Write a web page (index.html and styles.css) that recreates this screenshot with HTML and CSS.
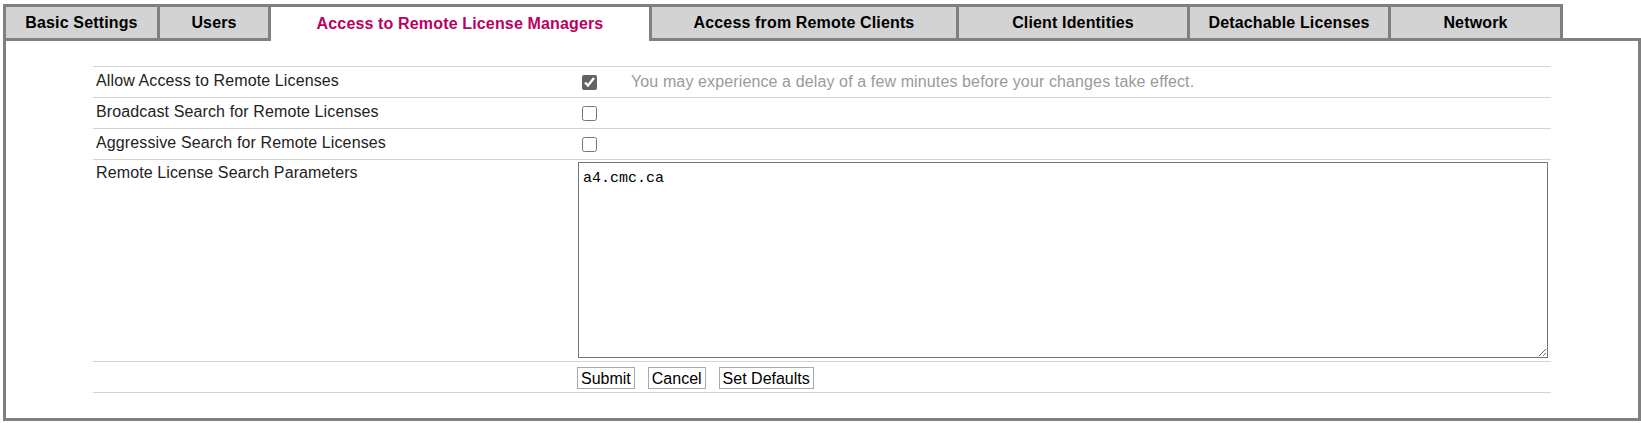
FILE: index.html
```html
<!DOCTYPE html>
<html lang="en">
<head>
<meta charset="utf-8">
<title>Access to Remote License Managers</title>
<link rel="stylesheet" href="styles.css">
</head>
<body>
<div class="tabs">
  <div class="tab tab-basic">Basic Settings</div>
  <div class="tab tab-users">Users</div>
  <div class="tab tab-arlm active">Access to Remote License Managers</div>
  <div class="tab tab-arc">Access from Remote Clients</div>
  <div class="tab tab-ci">Client Identities</div>
  <div class="tab tab-dl">Detachable Licenses</div>
  <div class="tab tab-net last">Network</div>
</div>
<div class="panel">
  <div class="form">
    <div class="row">
      <div class="label">Allow Access to Remote Licenses</div>
      <div class="value"><input type="checkbox" class="check" checked><span class="note">You may experience a delay of a few minutes before your changes take effect.</span></div>
    </div>
    <div class="row">
      <div class="label">Broadcast Search for Remote Licenses</div>
      <div class="value"><input type="checkbox" class="check"></div>
    </div>
    <div class="row">
      <div class="label">Aggressive Search for Remote Licenses</div>
      <div class="value"><input type="checkbox" class="check"></div>
    </div>
    <div class="row row-top">
      <div class="label label-top">Remote License Search Parameters</div>
      <div class="value value-top"><textarea class="params">a4.cmc.ca</textarea></div>
    </div>
    <div class="row">
      <div class="label"></div>
      <div class="value"><button class="btn">Submit</button><button class="btn">Cancel</button><button class="btn">Set Defaults</button></div>
    </div>
  </div>
</div>
</body>
</html>
```
FILE: styles.css
```css
html, body {
  margin: 0;
  background: #fff;
}
body {
  padding: 4px 0 0 3px;
  font-family: "Liberation Sans", Arial, sans-serif;
  font-size: 16px;
  letter-spacing: 0.12px;
  color: #222;
}
.tabs {
  display: flex;
  position: relative;
  z-index: 1;
  margin-bottom: -3px;
}
.tab {
  box-sizing: border-box;
  height: 37px;
  border: 3px solid #808080;
  border-right: none;
  background: #d3d3d3;
  color: #000;
  font-weight: bold;
  letter-spacing: 0.15px;
  display: flex;
  align-items: center;
  justify-content: center;
  white-space: nowrap;
}
.tab.last { border-right: 3px solid #808080; }
.tab.active {
  background: #fff;
  border-bottom: none;
  color: #bb0062;
}
.tab-basic { width: 154px; }
.tab-users { width: 111px; }
.tab-arlm { width: 381px; }
.tab-arc { width: 307px; }
.tab-ci { width: 231px; }
.tab-dl { width: 201px; }
.tab-net { width: 175px; }

.panel {
  border: 3px solid #808080;
  padding: 25px 87px 25px 87px;
}
.form {
  border-bottom: 1px solid #d3d3d3;
}
.row {
  display: flex;
  align-items: center;
  min-height: 30px;
  border-top: 1px solid #d3d3d3;
}
.row-top { align-items: flex-start; }
.label {
  width: 482px;
  padding: 0 0 2px 3px;
  flex: none;
  line-height: 18px;
}
.label-top { padding-top: 4px; }
.value {
  flex: 1;
  display: flex;
  align-items: center;
}
.value-top { padding: 2px 0 3px; }
.check {
  width: 15px;
  height: 15px;
  margin: 3px 3px 3px 4px;
  accent-color: #636363;
}
.note {
  margin-left: 31px;
  color: #9a9a9a;
}
.params {
  box-sizing: border-box;
  width: 970px;
  height: 196px;
  margin: 0;
  border: 1px solid #767676;
  padding: 6px 3px 2px 4px;
  font-family: "Liberation Mono", "Courier New", monospace;
  font-size: 15px;
  letter-spacing: 0;
  line-height: 20px;
  color: #000;
  resize: both;
}
.btn {
  font-family: "Liberation Sans", Arial, sans-serif;
  font-size: 16px;
  letter-spacing: 0;
  line-height: 19px;
  height: 22px;
  padding: 0 3px;
  margin: 2px 13px 0 0;
  background: #fff;
  border: 1px solid #a9a9a9;
  border-radius: 0;
  color: #000;
}
.btn:first-child { margin-left: -1px; }
```
